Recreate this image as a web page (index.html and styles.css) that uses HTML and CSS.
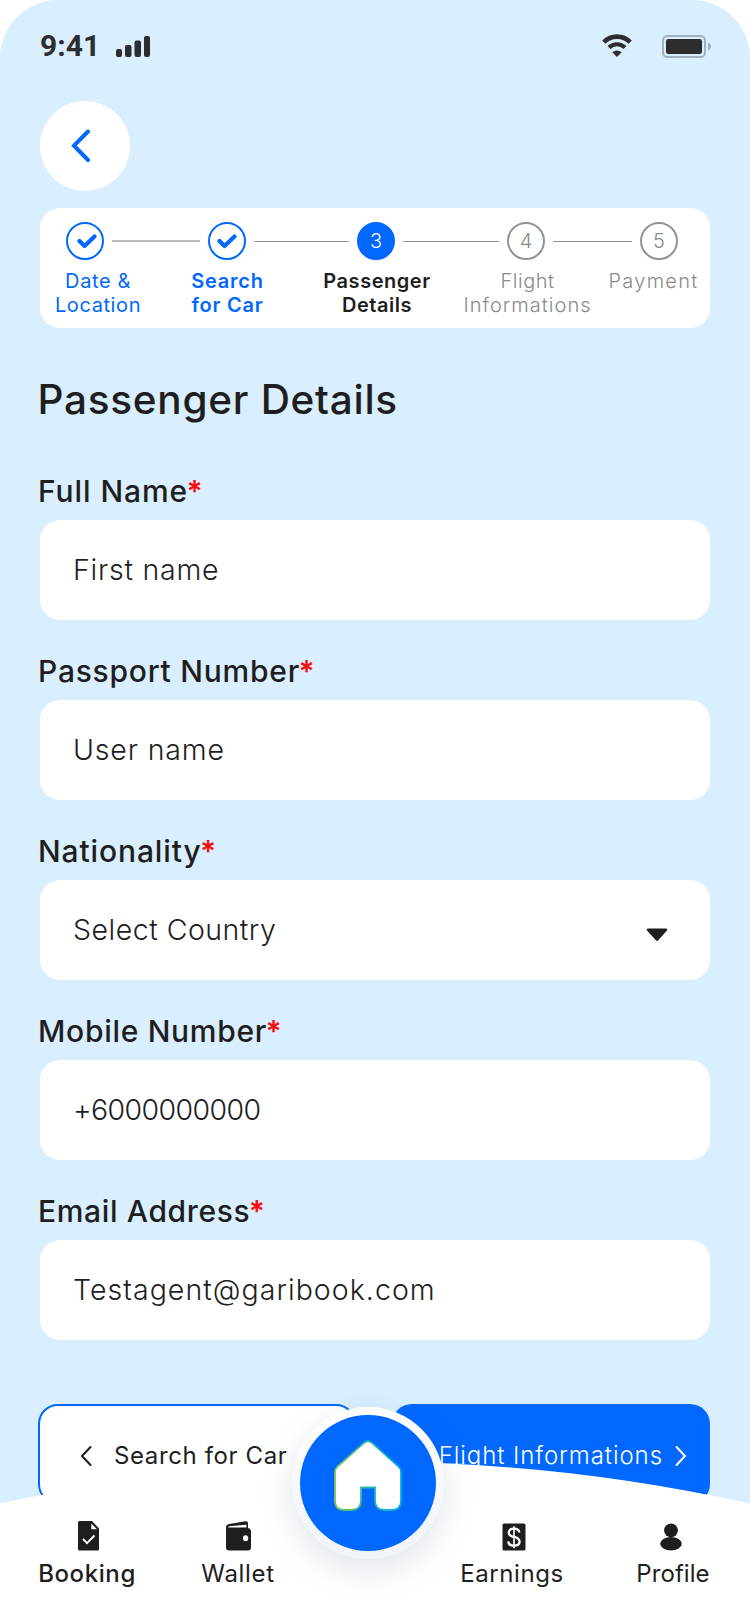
FILE: index.html
```html
<!DOCTYPE html>
<html lang="en">
<head>
<meta charset="utf-8">
<title>Passenger Details</title>
<link rel="stylesheet" href="styles.css">
</head>
<body>
<div class="screen">
  <header class="status">
    <span class="time">9:41</span>
    <svg class="signal" width="34" height="21" viewBox="0 0 34 21"><rect x="0" y="13" width="6" height="8" rx="2"/><rect x="9" y="9" width="6.5" height="12" rx="2"/><rect x="18.5" y="4.500" width="6.500" height="16.500" rx="2"/><rect x="28" y="0" width="6" height="21" rx="2"/></svg>
    <svg class="wifi" width="32" height="24" viewBox="0 0 32 24"><path d="M2.800 8.200a18.500 18.500 0 0 1 26.400 0" fill="none" stroke="#2d2d2d" stroke-width="4.600"/><path d="M8 13.500a11.500 11.500 0 0 1 16 0" fill="none" stroke="#2d2d2d" stroke-width="4.200"/><path d="M16 23L11.300 18.200q4.700-3.400 9.400 0z"/></svg>
    <svg class="battery" width="50" height="24" viewBox="0 0 50 24"><rect x="1" y="1" width="42" height="21" rx="4.500" fill="none" stroke="#a0b0bc" stroke-width="2"/><rect x="4" y="4" width="36" height="15" rx="2.200"/><path d="M46 7.500q3 1.300 3 4t-3 4z" fill="#a0b0bc"/></svg>
  </header>

  <button class="back" aria-label="Back"><svg width="20" height="34" viewBox="0 0 20 34"><path d="M17 2.500L3 16.700l14 14.300" fill="none" stroke="#0068ff" stroke-width="4" stroke-linecap="round"/></svg></button>

  <section class="stepper">
    <div class="track">
      <span class="dot done"><svg width="20" height="15" viewBox="0 0 20 15"><path d="M2.500 7l5 5L17.500 2.500" fill="none" stroke="#0068ff" stroke-width="4.200" stroke-linecap="round" stroke-linejoin="round"/></svg></span>
      <i class="line pale l1"></i>
      <span class="dot done second"><svg width="20" height="15" viewBox="0 0 20 15"><path d="M2.500 7l5 5L17.500 2.500" fill="none" stroke="#0068ff" stroke-width="4.200" stroke-linecap="round" stroke-linejoin="round"/></svg></span>
      <i class="line l2"></i>
      <span class="dot active">3</span>
      <i class="line l3"></i>
      <span class="dot">4</span>
      <i class="line l4"></i>
      <span class="dot">5</span>
    </div>
    <div class="names">
      <span class="name n1">Date &amp;<br>Location</span>
      <span class="name n2">Search<br>for Car</span>
      <span class="name n3">Passenger<br>Details</span>
      <span class="name n4"><span class="snug">Flight</span><br>Informations</span>
      <span class="name n5">Payment</span>
    </div>
  </section>

  <h1 class="title">Passenger Details</h1>

  <form class="form">
    <div class="field"><div class="label full">Full Name<b>*</b></div><div class="input first">First name</div></div>
    <div class="field"><div class="label passport">Passport Number<b>*</b></div><div class="input user">User name</div></div>
    <div class="field"><div class="label nation">Nationality<b>*</b></div><div class="input country">Select Country<svg width="22" height="14" viewBox="0 0 22 14"><path d="M2 1.700h18L11 11.600z" stroke="#1e1e1e" stroke-width="2.600" stroke-linejoin="round" fill="#1e1e1e"/></svg></div></div>
    <div class="field"><div class="label mobile">Mobile Number<b>*</b></div><div class="input phone">+6000000000</div></div>
    <div class="field"><div class="label email">Email Address<b>*</b></div><div class="input mail">Testagent@garibook.com</div></div>
  </form>

  <div class="actions">
    <div class="btn prev"><svg width="12" height="22" viewBox="0 0 12 22"><path d="M10.500 2L2 11l8.500 9" fill="none" stroke="#1e1e1e" stroke-width="2" stroke-linecap="round" stroke-linejoin="round"/></svg><span>Search for Car</span></div>
    <div class="btn next"><span>Flight Informations</span><svg width="12" height="22" viewBox="0 0 12 22"><path d="M1.500 2l8.500 9-8.500 9" fill="none" stroke="#fff" stroke-width="2" stroke-linecap="round" stroke-linejoin="round"/></svg></div>
  </div>

  <nav class="nav">
    <svg class="curve" width="750" height="162" viewBox="0 0 750 162"><path d="M0 41.500Q375-41.500 750 41.500V162H0z" fill="#fff"/></svg>
    <div class="tabs">
      <div class="tab booking"><svg width="22" height="30" viewBox="0 0 22 30"><path fill-rule="evenodd" d="M1.500 0H14l7 7.500V28q0 1.500-1.500 1.500h-18Q0 29.500 0 28V1.500Q0 0 1.500 0zM13.300 2.500V8.200H19z"/><path d="M5 18l4 4.200L16.500 14.500" fill="none" stroke="#fff" stroke-width="1.900"/></svg><span>Booking</span></div>
      <div class="tab wallet"><svg width="26" height="30" viewBox="0 0 26 30"><path fill-rule="evenodd" d="M0 6.500Q0 3.600 3 3L19.500.300Q22 0 22 2.300V7Q25 7.500 25 10.500V26.500q0 3-3 3H3q-3 0-3-3zM2 6.500H20.500V4.200q0-.700-.800-.500L3.500 5.300Q2 5.500 2 6.500z"/><ellipse cx="19.600" cy="17.300" rx="2.600" ry="3" fill="#fff"/></svg><span>Wallet</span></div>
      <div class="tab earnings"><svg width="24" height="28" viewBox="0 0 24 28"><rect x=".500" y=".500" width="23" height="27" rx="1.500"/><path d="M17.300 9.500Q17 5.700 12 5.700T6.700 9.700Q6.700 12.700 12 13.800T17.600 18.500Q17.600 22.600 12 22.600T6.300 18.400" fill="none" stroke="#fff" stroke-width="2.300"/><path d="M12 3.200v22" stroke="#fff" stroke-width="1.600"/></svg><span>Earnings</span></div>
      <div class="tab profile"><svg width="22" height="28" viewBox="0 0 22 28"><circle cx="11" cy="7.300" r="6.900"/><ellipse cx="11" cy="20.700" rx="10.800" ry="6.700"/></svg><span>Profile</span></div>
    </div>
    <div class="home"><div class="disc"><svg width="68" height="72" viewBox="0 0 68 72"><defs><linearGradient id="edge" x1="0" x2="1" y1="0" y2="0"><stop offset="0" stop-color="#7cc45c"/><stop offset=".5" stop-color="#2cb7a6"/><stop offset="1" stop-color="#00aeef"/></linearGradient></defs><path d="M30.300 2.700Q34-.200 37.700 2.700L64.500 26.700Q67 29 67 32.500V60.500Q67 70 58.500 70H50.500Q41 70 41 60.500V47.500H27V60.500Q27 70 17.500 70H10.500Q1 70 1 60.500V32.500Q1 29 3.500 26.700z" fill="#fff" stroke="url(#edge)" stroke-width="1.800"/></svg></div></div>
  </nav>
</div>
</body>
</html>
```
FILE: styles.css
```css
body {
  margin: 0;
  background: #fff;
  font-family: Inter, "Open Sans", sans-serif;
  color: #1e1e1e;
}

.screen {
  position: relative;
  box-sizing: border-box;
  width: 750px;
  height: 1624px;
  padding: 34px 40px 0;
  overflow: hidden;
  background: #d9eeff;
  border-radius: 58px 58px 0 0;
}

.screen svg { display: block; flex: none; }

/* Status bar */
.status {
  display: flex;
  align-items: flex-start;
  height: 67px;
  fill: #2d2d2d;
}
.time {
  width: 76px;
  font: 700 30px/24px Roboto, sans-serif;
  letter-spacing: 0;
  color: #2d2d2d;
}
.signal { margin: 2px 0 0; }
.time, .signal, .wifi, .battery { flex: none; }
.wifi { margin: 0 0 0 451px; }
.battery { margin: 1px 0 0 29px; }

.back {
  display: flex;
  align-items: center;
  width: 90px;
  height: 90px;
  padding: 0 0 0 31px;
  border: 0;
  border-radius: 50%;
  background: #fff;
}

/* Progress steps */
.stepper {
  box-sizing: border-box;
  height: 120px;
  margin-top: 17px;
  padding: 14px 0 0;
  border-radius: 20px;
  background: #fff;
}
.track {
  display: flex;
  align-items: center;
  padding-left: 26px;
}
.dot {
  display: flex;
  flex: none;
  align-items: center;
  justify-content: center;
  box-sizing: border-box;
  width: 38px;
  height: 38px;
  border: 2px solid #929292;
  border-radius: 50%;
  font-size: 20px;
  font-weight: 300;
  color: #8a8a8a;
}
.dot.done { border-color: #0068ff; }
.dot.done svg { margin-left: 4px; }
.dot.second svg { margin-left: 0; }
.dot.active { border-color: #0068ff; background: #0068ff; color: #fff; }
.line { flex: none; height: 1px; background: #929292; }
.line.pale { height: 2px; background: #bcbcbc; }
.l1 { width: 88px; margin: 0 8px; }
.l2 { width: 95px; margin: 0 8px; }
.l3 { width: 96px; margin: 0 8px; }
.l4 { width: 79px; margin: 0 8px; }
.names {
  display: flex;
  margin-top: 9px;
  padding-left: 13px;
  font-size: 20px;
  line-height: 24px;
  text-align: center;
  white-space: nowrap;
}
.name { flex: none; }
.n1 { width: 90px; letter-spacing: .600px; color: #0068ff; }
.n2 { width: 80px; margin-left: 44.500px; font-weight: 600; letter-spacing: .750px; color: #0068ff; }
.n3 { width: 112px; margin-left: 53.500px; font-weight: 600; letter-spacing: .530px; }
.n4 { width: 132px; margin-left: 28.500px; font-weight: 300; letter-spacing: 1.040px; color: #8a8a8a; }
.n5 { width: 94px; margin-left: 13px; font-weight: 300; letter-spacing: 1.280px; color: #8a8a8a; }
.snug { letter-spacing: .490px; }

.title {
  margin: 48px 0 49px -2.500px;
  font-size: 40.500px;
  font-weight: 500;
  line-height: 48px;
  letter-spacing: .720px;
}

/* Form */
.field { margin-bottom: 33px; }
.label {
  margin: 0 0 11px -2px;
  font-size: 30px;
  font-weight: 500;
  line-height: 36px;
}
.label b { margin-left: -1.500px; font-weight: 600; letter-spacing: 0; color: #ff0a0f; }
.full { letter-spacing: .910px; }
.passport { letter-spacing: .760px; }
.nation { letter-spacing: .880px; }
.mobile { letter-spacing: .700px; }
.email { letter-spacing: .640px; }
.input {
  display: flex;
  align-items: center;
  justify-content: space-between;
  box-sizing: border-box;
  height: 100px;
  padding: 0 42px 2px 33px;
  border-radius: 20px;
  background: #fff;
  font-size: 28.500px;
  font-weight: 300;
}
.first { letter-spacing: .760px; }
.user { letter-spacing: .840px; }
.country { letter-spacing: .500px; }
.country svg { margin-top: 11px; }
.phone { letter-spacing: -.600px; }
.mail { letter-spacing: 1.040px; }

/* Step buttons */
.actions {
  display: flex;
  justify-content: space-between;
  margin: 64px 0 0 -2px;
}
.btn {
  display: flex;
  align-items: center;
  box-sizing: border-box;
  width: 318px;
  height: 100px;
  padding-top: 3px;
  border-radius: 20px;
  font-size: 24px;
  white-space: nowrap;
}
.prev {
  gap: 22px;
  padding-left: 40px;
  border: 2px solid #0068ff;
  background: #fff;
  letter-spacing: .620px;
}
.next {
  justify-content: flex-end;
  gap: 12px;
  padding-right: 23px;
  background: #0068ff;
  color: #fff;
  font-weight: 300;
  letter-spacing: .930px;
}

/* Bottom navigation, laid over the page content */
.nav {
  position: absolute;
  left: 0;
  bottom: 0;
  width: 750px;
  height: 162px;
}
.curve { position: absolute; left: 0; top: 0; }
.tabs {
  position: relative;
  display: flex;
  align-items: flex-end;
  padding: 59px 0 0 38px;
  fill: #1e1e1e;
}
.tab {
  display: flex;
  flex-direction: column;
  align-items: center;
  gap: 9px;
  font-size: 24px;
  line-height: 28px;
}
.booking { width: 98px; font-weight: 500; letter-spacing: .600px; }
.wallet { width: 76px; margin-left: 64px; letter-spacing: .680px; }
.earnings { width: 104px; margin-left: 184px; letter-spacing: .550px; }
.profile { width: 74px; margin-left: 72px; letter-spacing: .070px; }
.booking svg { margin-left: 3px; }
.wallet svg { margin-left: 2px; }
.earnings svg { margin-left: 3px; }
.profile svg { margin-right: 4px; }
.home {
  position: absolute;
  left: 292px;
  top: -55px;
  display: flex;
  align-items: center;
  justify-content: center;
  width: 152px;
  height: 152px;
  border-radius: 50%;
  background: linear-gradient(#fdfeff, #eff4f9);
  box-shadow: 0 12px 34px rgba(50, 90, 140, .15);
}
.disc {
  display: flex;
  align-items: center;
  justify-content: center;
  width: 136px;
  height: 136px;
  border-radius: 50%;
  background: #0068ff;
}
.disc svg { margin-top: -14px; }
```
